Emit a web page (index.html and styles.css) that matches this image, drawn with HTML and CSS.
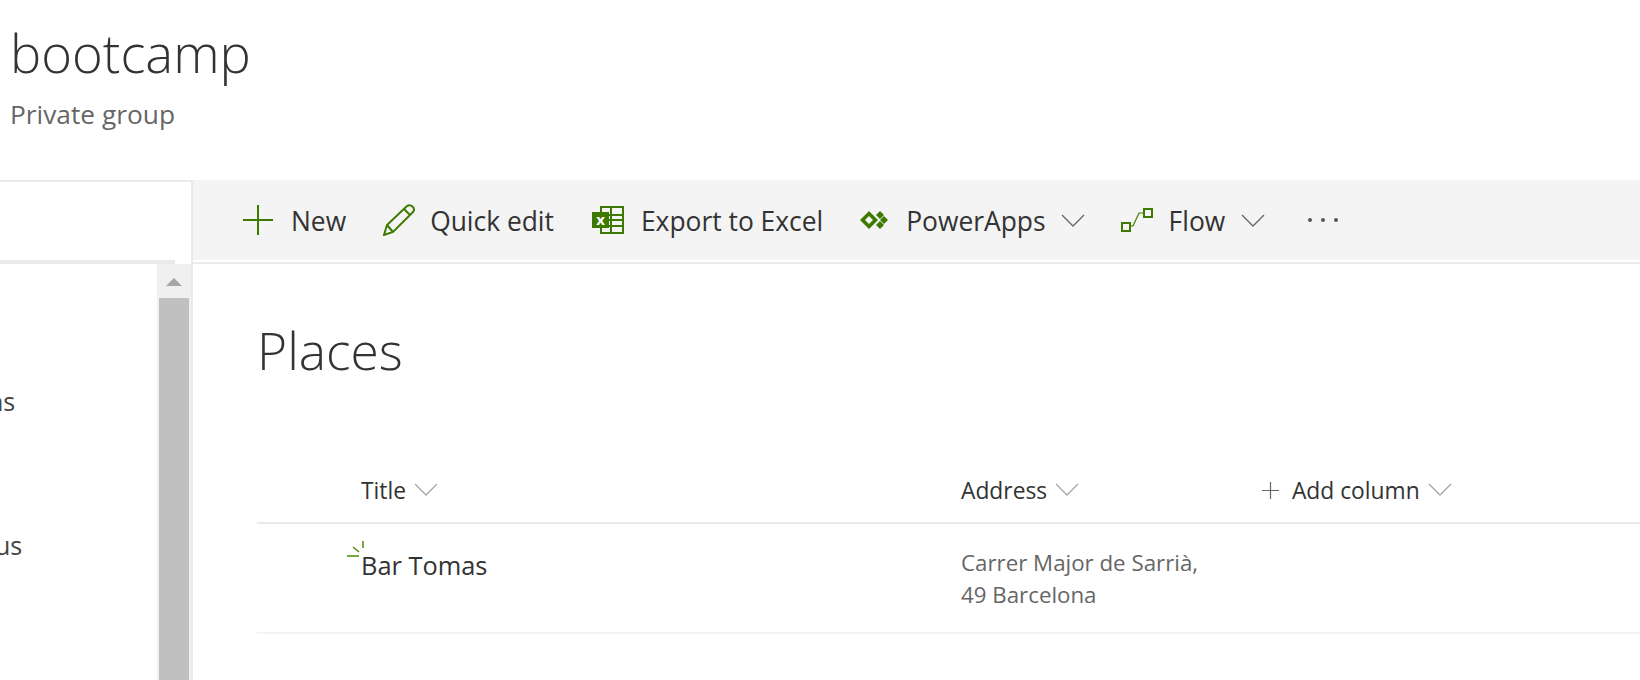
FILE: index.html
```html
<!DOCTYPE html>
<html lang="en">
<head>
  <meta charset="UTF-8" />
  <title>Places - bootcamp</title>
  <link rel="stylesheet" href="styles.css">
</head>
<body>

<div class="site-header">
  <div class="site-name">bootcamp</div>
  <div class="site-type">Private group</div>
</div>

<div class="page">
  <div class="sidebar">
    <div class="nav-top"></div>
    <div class="nav-area">
      <div class="nav-list">
        <div class="nav-item nav-item-first">ns</div>
        <div class="nav-item nav-item-second">us</div>
      </div>
      <div class="scrollbar">
        <div class="scroll-arrow"><div class="scroll-triangle"></div></div>
        <div class="scroll-thumb"></div>
      </div>
    </div>
  </div>

  <div class="content">
    <div class="toolbar">
      <div class="cmd cmd-new">
        <svg class="icon" width="30" height="30" viewBox="0 0 30 30"><path d="M0 15H30M15 0V30" fill="none" stroke="#3f7a00" stroke-width="2"/></svg>
        <span>New</span>
      </div>
      <div class="cmd cmd-edit">
        <svg class="icon" width="32" height="32" viewBox="0 0 32 32"><path d="M1 31L4 21L24 2Q27 0 30 3Q32 6 30 8L10 28ZM4 21L10 28M21 5L27 11" fill="none" stroke="#3f7a00" stroke-width="2"/></svg>
        <span>Quick edit</span>
      </div>
      <div class="cmd cmd-excel">
        <svg class="icon" width="32" height="28" viewBox="0 0 32 28"><path d="M9 1H31V27H9ZM9 9H31M9 14H31M9 20H31M19 1V27" fill="none" stroke="#3f7a00" stroke-width="2"/><rect x="0" y="6" width="17" height="16" fill="#3f7a00"/><text class="excel-x" x="8.5" y="19">x</text></svg>
        <span>Export to Excel</span>
      </div>
      <div class="cmd cmd-apps">
        <svg class="icon" width="28" height="20" viewBox="0 0 28 20"><path d="M9 1L18 10L9 19L0 10ZM9 6L5 10L9 14L13 10Z" fill="#3f7a00" fill-rule="evenodd"/><path d="M20 1L24 5L20 9L16 5ZM20 11L24 15L20 19L16 15ZM24 6L28 10L24 14L20 10Z" fill="#3f7a00"/></svg>
        <span>PowerApps</span>
        <svg class="chevron" width="24" height="13" viewBox="0 0 24 13"><path d="M1 1L12 12L23 1" fill="none" stroke="#666" stroke-width="1.3"/></svg>
      </div>
      <div class="cmd cmd-flow">
        <svg class="icon" width="32" height="24" viewBox="0 0 32 24"><path d="M1 15H9V23H1ZM23 1H31V9H23Z" fill="none" stroke="#3f7a00" stroke-width="2"/><path d="M9 18H12L18 5H23" fill="none" stroke="#3f7a00" stroke-width="1.2"/></svg>
        <span>Flow</span>
        <svg class="chevron" width="24" height="13" viewBox="0 0 24 13"><path d="M1 1L12 12L23 1" fill="none" stroke="#666" stroke-width="1.3"/></svg>
      </div>
      <div class="more">
        <span class="dot"></span><span class="dot"></span><span class="dot"></span>
      </div>
    </div>

    <div class="list-area">
      <h1 class="list-title">Places</h1>
      <div class="row row-head">
        <div class="col col-title">Title
          <svg class="head-chevron" width="24" height="13" viewBox="0 0 24 13"><path d="M1 1L12 12L23 1" fill="none" stroke="#a6a6a6" stroke-width="1.3"/></svg>
        </div>
        <div class="col col-address">Address
          <svg class="head-chevron" width="24" height="13" viewBox="0 0 24 13"><path d="M1 1L12 12L23 1" fill="none" stroke="#a6a6a6" stroke-width="1.3"/></svg>
        </div>
        <div class="col col-add">
          <svg class="add-plus" width="17" height="17" viewBox="0 0 17 17"><path d="M0 8.5H17M8.5 0V17" fill="none" stroke="#666" stroke-width="1.2"/></svg>
          Add column
          <svg class="head-chevron" width="24" height="13" viewBox="0 0 24 13"><path d="M1 1L12 12L23 1" fill="none" stroke="#a6a6a6" stroke-width="1.3"/></svg>
        </div>
      </div>
      <div class="row row-item">
        <div class="col col-title item-name">
          <svg class="new-mark" width="18" height="16" viewBox="0 0 18 16"><path d="M0 15H12M6 6L12 11M16 0V7" fill="none" stroke="#4f8a00" stroke-width="1.5"/></svg>
          Bar Tomas
        </div>
        <div class="col col-address item-address">Carrer Major de Sarrià,<br>49 Barcelona</div>
      </div>
    </div>
  </div>
</div>

</body>
</html>
```

FILE: styles.css
```css
html, body {
  margin: 0;
  height: 680px;
  overflow: hidden;
}
body {
  font-family: "Open Sans", "Noto Sans", sans-serif;
  background: #fff;
  color: #333;
}

/* site header */
.site-header {
  height: 180px;
  padding-left: 10px;
  box-sizing: border-box;
}
.site-name {
  font-size: 52.5px;
  font-weight: 300;
  line-height: 70px;
  padding-top: 18px;
}
.site-type {
  font-size: 26.3px;
  line-height: 32px;
  margin-top: 10px;
  color: #666;
}

/* page */
.page {
  display: flex;
  height: 500px;
}
.sidebar {
  width: 191px;
  flex-shrink: 0;
  border-top: 2px solid #eaeaea;
  border-right: 2px solid #eaeaea;
  display: flex;
  flex-direction: column;
}
.nav-top {
  height: 78px;
  width: 175px;
  border-bottom: 4px solid #eaeaea;
}
.nav-area {
  flex: 1;
  display: flex;
  min-height: 0;
}
.nav-list {
  flex: 1;
  overflow: hidden;
}
.nav-item {
  font-size: 25px;
  line-height: 32px;
  color: #444;
}
.nav-item-first {
  margin: 121px 0 0 -12px;
}
.nav-item-second {
  margin: 112px 0 0 -5px;
}
.scrollbar {
  width: 34px;
  background: #f0f0f0;
  flex-shrink: 0;
}
.scroll-arrow {
  height: 34px;
  display: flex;
  justify-content: center;
  padding-top: 14px;
  box-sizing: border-box;
}
.scroll-triangle {
  width: 0;
  height: 0;
  border-left: 8px solid transparent;
  border-right: 8px solid transparent;
  border-bottom: 8px solid #a6a6a6;
}
.scroll-thumb {
  width: 30px;
  height: 400px;
  margin-left: 2px;
  background: #c0c0c0;
}

/* command bar */
.content {
  flex: 1;
  min-width: 0;
}
.toolbar {
  height: 80px;
  background: #f4f4f4;
  display: flex;
  align-items: center;
  padding-left: 50px;
  font-size: 26.4px;
  color: #333;
}
.cmd {
  display: flex;
  align-items: center;
}
.cmd span {
  position: relative;
  top: 1px;
}
.icon {
  margin-right: 16px;
  flex-shrink: 0;
}
.cmd-new .icon { margin-right: 18px; }
.cmd-edit .icon { margin-right: 15px; }
.cmd-excel .icon { margin-right: 17px; }
.cmd-apps .icon { margin-right: 18px; }
.chevron {
  margin-left: 15px;
}
.cmd-flow .chevron { margin-left: 16px; }
.cmd-new { margin-right: 37px; }
.cmd-edit { margin-right: 38px; }
.cmd-excel { margin-right: 37px; }
.cmd-apps { margin-right: 36px; }
.excel-x {
  font-size: 15px;
  font-weight: 700;
  fill: #fff;
  text-anchor: middle;
}
.more {
  display: flex;
  gap: 9px;
  margin-left: 43px;
}
.dot {
  width: 4px;
  height: 4px;
  border-radius: 50%;
  background: #555;
}

/* list */
.list-area {
  margin: 2px 0 0 64px;
}
.list-area::before {
  content: "";
  display: block;
  height: 2px;
  background: #eaeaea;
  margin-left: -64px;
}
.list-title {
  font-size: 51.5px;
  font-weight: 300;
  line-height: 70px;
  margin: 0;
  padding-top: 51px;
}
.row {
  display: flex;
  padding-left: 104px;
}
.row-head {
  height: 64px;
  margin-top: 73px;
  align-items: center;
  font-size: 22.8px;
  border-bottom: 2px solid #eaeaea;
  color: #333;
}
.row-item {
  height: 108px;
  border-bottom: 2px solid #f4f4f4;
  align-items: center;
}
.col-title {
  width: 600px;
  flex-shrink: 0;
  position: relative;
}
.col-address {
  width: 301px;
  flex-shrink: 0;
}
.head-chevron {
  margin-left: 2px;
  vertical-align: 3px;
}
.add-plus {
  margin-right: 7px;
  vertical-align: 0;
}
.item-name {
  font-size: 25.4px;
  align-self: flex-start;
  margin-top: 24px;
}
.new-mark {
  position: absolute;
  left: -14px;
  top: -7px;
}
.item-address {
  font-size: 22.3px;
  line-height: 32px;
  color: #666;
  margin-top: 2px;
}
```
